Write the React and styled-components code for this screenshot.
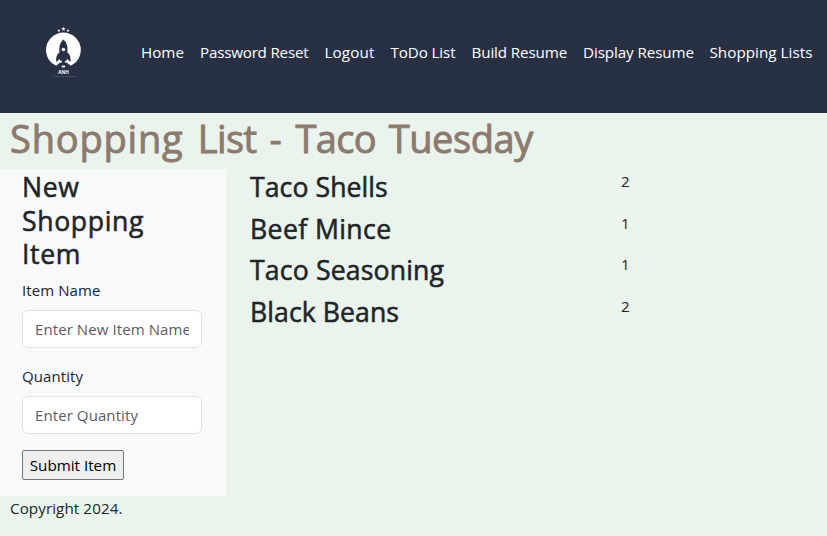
import React from "react";
import styled, { createGlobalStyle } from "styled-components";

const GlobalStyle = createGlobalStyle`
  *, *::before, *::after { box-sizing: border-box; }
  body {
    margin: 0;
    min-height: 100vh;
    background: #eaf4ec;
    color: #212529;
    font-family: "Open Sans", "Noto Sans", sans-serif;
    font-size: 15.2px;
    line-height: 24px;
    overflow: hidden;
  }
`;

const Header = styled.header`
  display: flex;
  align-items: flex-start;
  height: 113px;
  background: #283044;
`;

const Logo = styled.svg`
  flex: none;
  width: 70px;
  height: 70px;
  margin: 15px 33px 0 30px;
`;

const Nav = styled.nav`
  display: flex;
  padding-top: 40px;
`;

const NavLink = styled.a`
  width: ${(p) => p.$width}px;
  padding-left: 8px;
  color: #fff;
  text-decoration: none;
  white-space: nowrap;
  letter-spacing: ${(p) => p.$track}px;
`;

const Title = styled.h1`
  height: 48px;
  margin: 0 0 8px;
  padding-left: 10px;
  color: #8d7a6f;
  font-size: 38px;
  font-weight: 400;
  line-height: 51px;
  white-space: nowrap;
  -webkit-text-stroke: 0.9px currentColor;
`;

const TitleWord = styled.span`
  display: inline-block;
  letter-spacing: ${(p) => p.$track}px;
  margin-right: ${(p) => p.$gap}px;
`;

const Content = styled.main`
  display: flex;
  align-items: flex-start;
`;

const FormPanel = styled.form`
  width: 226px;
  height: 327px;
  padding: 2px 24px 0 22px;
  background: #f8f9fb;
`;

const ItemHeading = styled.h3`
  margin: 0;
  font-size: 26.6px;
  font-weight: 400;
  line-height: 33.6px;
  letter-spacing: ${(p) => p.$track}px;
  -webkit-text-stroke: 0.55px currentColor;
`;

const PanelTitle = styled(ItemHeading)`
  width: 150px;
  margin-bottom: 6px;
`;

const Label = styled.label`
  display: block;
  margin-bottom: 8px;
  font-size: 15px;
  letter-spacing: 0.08px;
`;

const Input = styled.input`
  display: block;
  width: 180px;
  height: 38px;
  margin: 0 0 16px;
  padding: 6px 12px;
  border: 1px solid #dee2e6;
  border-radius: 6px;
  background: #fff;
  color: #212529;
  font: inherit;
  font-size: 15px;
  letter-spacing: 0.09px;
  &::placeholder { color: #595c5f; opacity: 1; }
`;

const Submit = styled.button`
  display: block;
  width: 102px;
  height: 30px;
  margin: 0;
  padding: 0;
  border: 1px solid #767676;
  border-radius: 2px;
  background: #efefef;
  color: #000;
  font: inherit;
  white-space: nowrap;
`;

const Items = styled.ul`
  flex: 1;
  margin: 0;
  padding: 2px 0 0 24px;
  list-style: none;
`;

const Item = styled.li`
  display: grid;
  grid-template-columns: 371px 1fr;
  height: 41.6px;
`;

const Amount = styled.span`
  line-height: 21px;
`;

const Footer = styled.footer`
  padding-left: 10px;
  line-height: 24px;
  letter-spacing: 0.08px;
`;

const links = [
  ["Home", 59, 0],
  ["Password Reset", 124.5, -0.22],
  ["Logout", 66, 0.15],
  ["ToDo List", 81, -0.12],
  ["Build Resume", 111.5, -0.12],
  ["Display Resume", 126.5, -0.09],
  ["Shopping Lists", 118, 0.04],
];

const titleWords = [
  ["Shopping", 0.8, 4.5],
  ["List", -0.6, 3],
  ["-", 0, 4],
  ["Taco", -0.7, 3],
  ["Tuesday", -0.4, 0],
];

const items = [
  ["Taco Shells", 2, 0.08],
  ["Beef Mince", 1, 0.4],
  ["Taco Seasoning", 1, 0.17],
  ["Black Beans", 2, 0.08],
];

const star = "M0-2 .6-.65 2-.6.9.3 1.25 1.7 0 .9-1.25 1.7-.9.3-2-.6-.6-.65Z";

function RocketLogo() {
  return (
    <Logo viewBox="0 0 70 70" aria-label="ANH">
      <g fill="#fff">
        <path d={star} transform="translate(33.4 14) scale(1.1)" />
        <path d={star} transform="translate(28.8 15.6) scale(.75)" />
        <path d={star} transform="translate(38 15.6) scale(.75)" />
        <circle cx="33.4" cy="35" r="17.4" />
      </g>
      <path
        fill="#283044"
        d="M33.4 24.5C30.3 27 29.2 30.5 29.3 34.5L29.4 37.5C26.8 39.5 26.1 42 26.1 46.9L29.7 44 30.7 46.1H36.1L37.1 44 40.7 46.9C40.7 42 40 39.5 37.4 37.5L37.5 34.5C37.6 30.5 36.5 27 33.4 24.5Z"
      />
      <circle cx="33.4" cy="34.5" r="1.7" fill="#fff" />
      <path
        fill="#283044"
        d="M32.2 45.5H34.7L35.1 47.6C36.8 47.3 38.1 48.2 38.6 49.3L40.8 50.2 38 53H35.5L34.7 50.4H32.1L31.3 53H28.8L26.1 50.2 28.2 49.3C28.7 48.2 30.1 47.3 31.8 47.6Z"
      />
      <text x="33.5" y="58.8" textAnchor="middle" textLength="10.5" lengthAdjust="spacingAndGlyphs" fill="#fff" fontSize="5" fontWeight="700">ANH</text>
      <text x="33.5" y="62.2" textAnchor="middle" textLength="23" fill="#929aa8" fontSize="2.2">A NEW ADVENTURE</text>
    </Logo>
  );
}

export default function App() {
  return (
    <>
      <GlobalStyle />
      <Header>
        <RocketLogo />
        <Nav>
          {links.map(([name, width, track]) => (
            <NavLink key={name} href="#" $width={width} $track={track}>{name}</NavLink>
          ))}
        </Nav>
      </Header>
      <Title>
        {titleWords.map(([word, track, gap]) => (
          <React.Fragment key={word}>
            <TitleWord $track={track} $gap={gap}>{word}</TitleWord>{" "}
          </React.Fragment>
        ))}
      </Title>
      <Content>
        <FormPanel>
          <PanelTitle $track={0.65}>New Shopping Item</PanelTitle>
          <Label htmlFor="name">Item Name</Label>
          <Input id="name" placeholder="Enter New Item Name" />
          <Label htmlFor="quantity">Quantity</Label>
          <Input id="quantity" placeholder="Enter Quantity" />
          <Submit type="button">Submit Item</Submit>
        </FormPanel>
        <Items>
          {items.map(([name, amount, track]) => (
            <Item key={name}>
              <ItemHeading $track={track}>{name}</ItemHeading>
              <Amount>{amount}</Amount>
            </Item>
          ))}
        </Items>
      </Content>
      <Footer>Copyright 2024.</Footer>
    </>
  );
}
